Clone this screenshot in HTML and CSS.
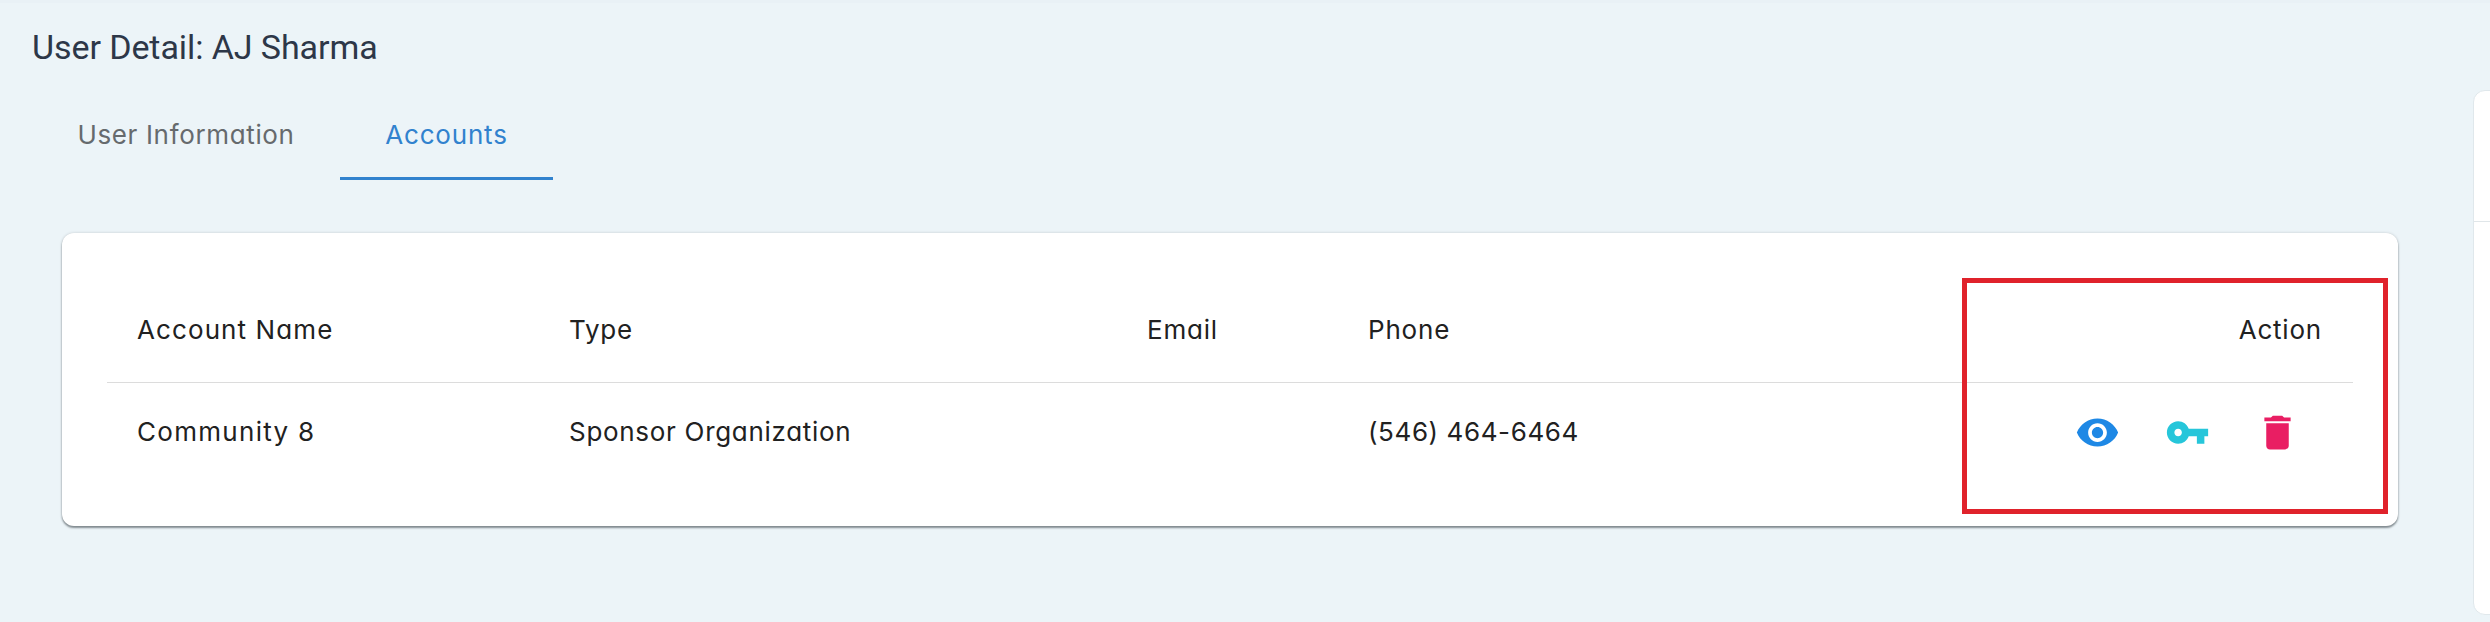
FILE: index.html
```html
<!DOCTYPE html>
<html lang="en">
<head>
<meta charset="utf-8">
<title>User Detail</title>
<link rel="stylesheet" href="styles.css">
</head>
<body>
<div class="page">
  <main class="main">
    <h1 class="title">User Detail: AJ Sharma</h1>
    <nav class="tabs">
      <a class="tab tab-info"><span>User Information</span></a>
      <a class="tab tab-accounts active"><span>Accounts</span></a>
    </nav>
    <section class="card">
      <div class="row head">
        <span class="c-name">Account Name</span>
        <span class="c-type">Type</span>
        <span class="c-email">Email</span>
        <span class="c-phone">Phone</span>
        <span class="c-action">Action</span>
      </div>
      <div class="row">
        <span class="v-name">Community 8</span>
        <span class="v-type">Sponsor Organization</span>
        <span></span>
        <span class="v-phone">(546) 464-6464</span>
        <div class="actions">
          <svg class="icon view" viewBox="0 0 24 24"><path d="M12 4.500C7 4.500 2.730 7.610 1 12c1.730 4.390 6 7.500 11 7.500s9.270-3.110 11-7.500c-1.730-4.390-6-7.500-11-7.500zM12 17c-2.760 0-5-2.240-5-5s2.240-5 5-5 5 2.240 5 5-2.240 5-5 5zm0-8c-1.660 0-3 1.340-3 3s1.340 3 3 3 3-1.340 3-3-1.340-3-3-3z"/></svg>
          <svg class="icon key" viewBox="0 0 24 24"><path d="M12.650 10C11.830 7.670 9.610 6 7 6c-3.310 0-6 2.690-6 6s2.690 6 6 6c2.610 0 4.830-1.670 5.650-4H17v4h4v-4h2v-4H12.650zM7 14c-1.100 0-2-.9-2-2s.9-2 2-2 2 .9 2 2-.9 2-2 2z"/></svg>
          <svg class="icon delete" viewBox="0 0 24 24"><path d="M6 19c0 1.100.9 2 2 2h8c1.100 0 2-.9 2-2V7H6v12zM19 4h-3.500l-1-1h-5l-1 1H5v2h14V4z"/></svg>
        </div>
      </div>
      <div class="highlight"></div>
    </section>
  </main>
  <aside class="panel"><div class="panel-head"></div></aside>
</div>
</body>
</html>
```
FILE: styles.css
```css
* { box-sizing: border-box; }
body {
  margin: 0;
  background: #ecf4f8;
  font-family: Inter, "Open Sans", sans-serif;
  font-feature-settings: "cv11" 1;
  font-size: 26px;
  font-weight: 400;
  letter-spacing: .8px;
  color: #212121;
}
.page {
  display: flex;
  justify-content: space-between;
  height: 622px;
  overflow: hidden;
  border-top: 3px solid #e9f1f6;
}
.main { width: 2398px; padding-left: 62px; }
.title {
  margin: 24px 0 0 -30px;
  font: 400 34px/40px Roboto, sans-serif;
  letter-spacing: -.08px;
  color: #2d3748;
  white-space: nowrap;
}
.tabs { display: flex; margin-top: 23px; height: 90px; }
.tab {
  display: flex;
  justify-content: center;
  padding-top: 25px;
  line-height: 40px;
  color: #666a6d;
  white-space: nowrap;
}
.tab-info { width: 248px; letter-spacing: .65px; }
.tab-accounts { width: 213px; margin-left: 30px; }
.tab.active { color: #3182ce; border-bottom: 3px solid #3182ce; }
.card {
  position: relative;
  margin-top: 53px;
  height: 293px;
  padding: 47px 45px 0 45px;
  border-radius: 12px;
  background: #fff;
  box-shadow: 0 2px 2px rgba(40, 50, 55, .5), 0 0 3px rgba(40, 50, 55, .2);
}
.row {
  display: grid;
  grid-template-columns: 432px 578px 221px 1fr auto;
  align-items: center;
  height: 99px;
  padding: 0 31px 0 30px;
  white-space: nowrap;
}
.row > span { padding-bottom: 2px; }
.row.head { height: 103px; border-bottom: 1px solid #dcdcdc; }
.row.head > span { padding-bottom: 4px; }
.c-name { letter-spacing: 1.1px; }
.v-name { letter-spacing: 1.3px; }
.v-type { letter-spacing: .7px; }
.v-phone { letter-spacing: .6px; }
.actions { display: flex; gap: 45px; margin-right: 22px; }
.icon { width: 45px; height: 45px; display: block; }
.view { fill: #1e88e5; }
.key { fill: #26c6da; }
.delete { fill: #e91e63; }
.highlight {
  position: absolute;
  left: 1900px;
  top: 45px;
  width: 426px;
  height: 236px;
  border: 5px solid #e0222b;
}
.panel {
  width: 40px;
  height: 525px;
  margin: 87px -23px 0 0;
  flex: none;
  border: 1px solid #e0e8ec;
  border-radius: 12px;
  background: #fff;
}
.panel-head { height: 131px; border-bottom: 1px solid #e0e6e9; }
```
